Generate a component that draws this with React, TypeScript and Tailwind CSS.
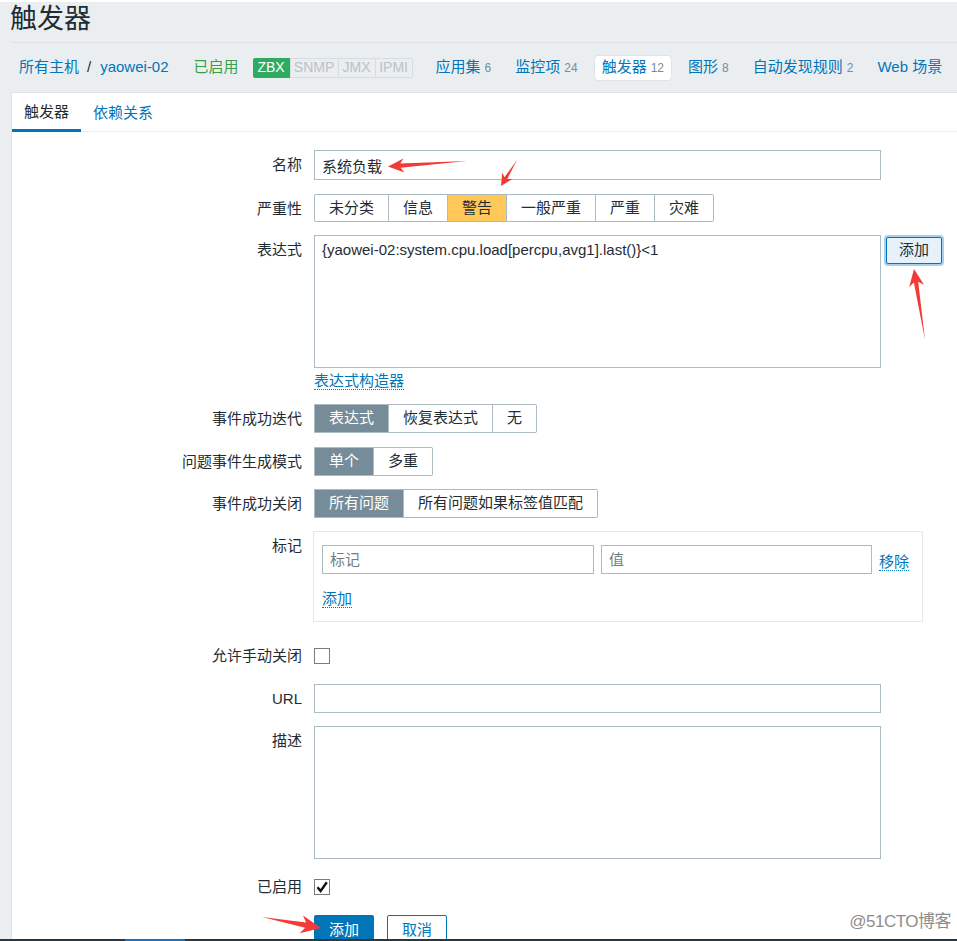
import React from 'react';

const blue = 'text-[#0275b8]';

function arrowPoints(x1: number, y1: number, x2: number, y2: number, head: number, hw: number, sw: number) {
  const dx = x2 - x1;
  const dy = y2 - y1;
  const len = Math.hypot(dx, dy);
  const ux = dx / len;
  const uy = dy / len;
  const px = -uy;
  const py = ux;
  const nx = x2 - ux * head * 0.78;
  const ny = y2 - uy * head * 0.78;
  const bx = x2 - ux * head;
  const by = y2 - uy * head;
  const pts = [
    [x1, y1],
    [nx + px * sw, ny + py * sw],
    [bx + px * hw, by + py * hw],
    [x2, y2],
    [bx - px * hw, by - py * hw],
    [nx - px * sw, ny - py * sw],
  ];
  return pts.map((p) => `${p[0].toFixed(1)},${p[1].toFixed(1)}`).join(' ');
}

// label sits on a 30px line but doesn't add height to the row
const Label: React.FC<{ children?: React.ReactNode }> = ({ children }) => (
  <div className="w-[290px] h-px shrink-0 text-right leading-[30px] text-[15px] text-[#1f2c33] whitespace-nowrap">{children}</div>
);

interface SegProps {
  items: string[];
  active: number;
  activeClass: string;
  h: string;
}

const Segmented: React.FC<SegProps> = ({ items, active, activeClass, h }) => (
  <div className={`flex ${h} rounded-[2px] overflow-hidden`}>
    {items.map((it, i) => (
      <div
        key={it}
        className={`flex items-center px-[14px] text-[15px] border-y border-l border-[#acbbc2] ${
          i === items.length - 1 ? 'border-r' : ''
        } ${i === active ? activeClass : 'bg-white text-[#1f2c33]'}`}
      >
        {it}
      </div>
    ))}
  </div>
);

const NavItem: React.FC<{ name: string; count?: string; active?: boolean }> = ({ name, count, active }) => (
  <div
    className={`flex items-center h-[26px] rounded-[4px] ${
      active ? 'bg-white border border-[#dfe4e7] px-[7px]' : 'px-[8px]'
    }`}
  >
    <span className={`${blue} text-[15px]`}>{name}</span>
    {count && <span className="ml-[4px] text-[12px] text-[#768d99]">{count}</span>}
  </div>
);

const CheckBox: React.FC<{ checked?: boolean }> = ({ checked }) => (
  <div className="w-[16px] h-[16px] border border-[#7b7b7b] bg-white flex items-center justify-center">
    {checked && (
      <svg width="14" height="14" viewBox="0 0 14 14">
        <path d="M2.5 7.2 L5.6 11 L11.8 2.2" fill="none" stroke="#111" strokeWidth="2.4" />
      </svg>
    )}
  </div>
);

export default function App() {
  return (
    <div className="relative w-[957px] h-[941px] overflow-hidden bg-[#ebeef0] font-['Liberation_Sans','Noto_Sans_CJK_SC',sans-serif] text-[#1f2c33] flex flex-col">
      <div className="h-[2px] bg-white shrink-0" />
      <div className="h-[40px] pl-[10px] pt-[4px] shrink-0">
        <h1 className="text-[27px] leading-[27px] text-[#1f2c33]">触发器</h1>
      </div>
      <div className="ml-[11px] h-px bg-[#dce1e4] shrink-0" />

      {/* host nav */}
      <div className="flex items-center h-[49px] ml-[11px] pl-[8px] shrink-0 text-[15px]">
        <span className={blue}>所有主机</span>
        <span className="ml-[8px] mr-[9px] text-[#1f2c33]">/</span>
        <span className={blue}>yaowei-02</span>
        <span className="ml-[25px] text-[#3a9e48]">已启用</span>
        <div className="ml-[14px] flex h-[20px] text-[14px] rounded-[2px] overflow-hidden">
          <div className="w-[37px] flex items-center justify-center bg-[#2fab61] text-white">ZBX</div>
          <div className="w-[49px] flex items-center justify-center border border-[#d6dde1] text-[#b8c3c8]">SNMP</div>
          <div className="w-[37px] flex items-center justify-center border-y border-r border-[#d6dde1] text-[#b8c3c8]">JMX</div>
          <div className="w-[37px] flex items-center justify-center border-y border-r border-[#d6dde1] text-[#b8c3c8]">IPMI</div>
        </div>
        <div className="ml-[15px] flex items-center gap-[8px]">
          <NavItem name="应用集" count="6" />
          <NavItem name="监控项" count="24" />
          <NavItem name="触发器" count="12" active />
          <NavItem name="图形" count="8" />
          <NavItem name="自动发现规则" count="2" />
          <NavItem name="Web 场景" />
        </div>
      </div>

      {/* main panel */}
      <div className="flex-1 ml-[11px] bg-white border-l border-t border-[#dfe4e7] flex flex-col">
        <div className="flex h-[39px] border-b border-[#ebeef0] shrink-0 text-[15px]">
          <div className="px-[12px] flex items-center border-b-[3px] border-[#0275b8] -mb-px pt-[2px] text-[#1f2c33]">触发器</div>
          <div className={`px-[12px] flex items-center pt-[2px] ${blue}`}>依赖关系</div>
        </div>

        <div className="flex flex-col pt-[18px]">
          {/* name */}
          <div className="flex gap-[12px]">
            <Label>名称</Label>
            <input
              readOnly
              value="系统负载"
              className="w-[567px] h-[30px] border border-[#acbbc2] px-[7px] text-[15px] text-[#1f2c33] outline-none"
            />
          </div>

          {/* severity */}
          <div className="flex gap-[12px] mt-[14px]">
            <Label>严重性</Label>
            <Segmented
              items={['未分类', '信息', '警告', '一般严重', '严重', '灾难']}
              active={2}
              activeClass="bg-[#ffc859] text-[#1f2c33]"
              h="h-[28px]"
            />
          </div>

          {/* expression */}
          <div className="flex gap-[12px] mt-[13px]">
            <Label>表达式</Label>
            <div className="flex flex-col items-start">
              <div className="flex items-start">
                <textarea
                  readOnly
                  value="{yaowei-02:system.cpu.load[percpu,avg1].last()}<1"
                  className="w-[567px] h-[133px] border border-[#acbbc2] px-[7px] pt-[5px] text-[15px] leading-[18px] text-[#1f2c33] resize-none outline-none"
                />
                <button className="ml-[5px] mt-[2px] w-[56px] h-[27px] rounded-[2px] border border-[#0275b8] bg-[#e6f1fa] text-[15px] text-[#1f2c33] shadow-[0_0_0_2px_#a8cff0]">
                  添加
                </button>
              </div>
              <span className={`mt-[4px] inline-block leading-[17px] text-[15px] ${blue} border-b border-dotted border-[#0275b8]`}>
                表达式构造器
              </span>
            </div>
          </div>

          {/* recovery */}
          <div className="flex gap-[12px] mt-[14px]">
            <Label>事件成功迭代</Label>
            <Segmented
              items={['表达式', '恢复表达式', '无']}
              active={0}
              activeClass="bg-[#768d99] text-white"
              h="h-[29px]"
            />
          </div>

          <div className="flex gap-[12px] mt-[14px]">
            <Label>问题事件生成模式</Label>
            <Segmented items={['单个', '多重']} active={0} activeClass="bg-[#768d99] text-white" h="h-[29px]" />
          </div>

          <div className="flex gap-[12px] mt-[13px]">
            <Label>事件成功关闭</Label>
            <Segmented
              items={['所有问题', '所有问题如果标签值匹配']}
              active={0}
              activeClass="bg-[#768d99] text-white"
              h="h-[29px]"
            />
          </div>

          {/* tags */}
          <div className="flex gap-[12px] mt-[13px]">
            <Label>标记</Label>
            <div className="-ml-px w-[610px] h-[91px] border border-[#e4e8eb] pl-[8px] pt-[13px] flex flex-col items-start">
              <div className="flex h-[29px]">
                <input
                  readOnly
                  placeholder="标记"
                  className="w-[272px] h-[29px] border border-[#acbbc2] px-[7px] text-[15px] outline-none placeholder:text-[#737d83]"
                />
                <input
                  readOnly
                  placeholder="值"
                  className="ml-[7px] w-[271px] h-[29px] border border-[#acbbc2] px-[7px] text-[15px] outline-none placeholder:text-[#737d83]"
                />
                <span className={`ml-[7px] mt-[8px] self-start inline-block leading-[17px] text-[15px] ${blue} border-b border-dotted border-[#0275b8]`}>
                  移除
                </span>
              </div>
              <span className={`mt-[16px] inline-block leading-[17px] text-[15px] ${blue} border-b border-dotted border-[#0275b8]`}>
                添加
              </span>
            </div>
          </div>

          {/* manual close */}
          <div className="flex gap-[12px] mt-[19px]">
            <Label>允许手动关闭</Label>
            <div className="h-[30px] flex items-center">
              <CheckBox />
            </div>
          </div>

          <div className="flex gap-[12px] mt-[13px]">
            <Label>URL</Label>
            <input readOnly className="w-[567px] h-[29px] border border-[#acbbc2] px-[7px] text-[15px] outline-none" />
          </div>

          <div className="flex gap-[12px] mt-[13px]">
            <Label>描述</Label>
            <textarea readOnly className="w-[567px] h-[133px] border border-[#acbbc2] px-[7px] text-[15px] resize-none outline-none" />
          </div>

          <div className="flex gap-[12px] mt-[13px]">
            <Label>已启用</Label>
            <div className="h-[30px] flex items-center">
              <CheckBox checked />
            </div>
          </div>

          <div className="flex gap-[12px] mt-[13px]">
            <div className="w-[290px] shrink-0" />
            <div className="flex gap-[13px]">
              <button className="w-[60px] h-[30px] rounded-[2px] bg-[#0275b8] text-white text-[15px]">添加</button>
              <button className="w-[60px] h-[30px] rounded-[2px] border border-[#0275b8] bg-white text-[#0275b8] text-[15px]">取消</button>
            </div>
          </div>
        </div>
      </div>

      {/* watermark */}
      <div className="absolute right-[6px] bottom-[9px] text-[17px] leading-[20px] text-[#8d8d8d] tracking-[-0.5px]">@51CTO博客</div>

      {/* bottom edge */}
      <div className="absolute left-0 bottom-0 w-full h-[2px] bg-[#2b3740]" />
      <div className="absolute left-[125px] bottom-0 w-[60px] h-[2px] bg-[#1b6fc0]" />

      {/* annotation arrows */}
      <svg className="absolute left-0 top-0 pointer-events-none" width="957" height="941" viewBox="0 0 957 941">
        <g fill="#f23a36">
          <polygon points={arrowPoints(467, 161, 388, 166.5, 16, 7, 2.2)} />
          <polygon points={arrowPoints(517, 160, 501, 186, 12, 6, 1.6)} />
          <polygon points={arrowPoints(925, 340, 914, 269, 17, 7.5, 2.2)} />
          <polygon points={arrowPoints(262, 917, 321, 928, 20, 9, 2.6)} />
        </g>
      </svg>
    </div>
  );
}
